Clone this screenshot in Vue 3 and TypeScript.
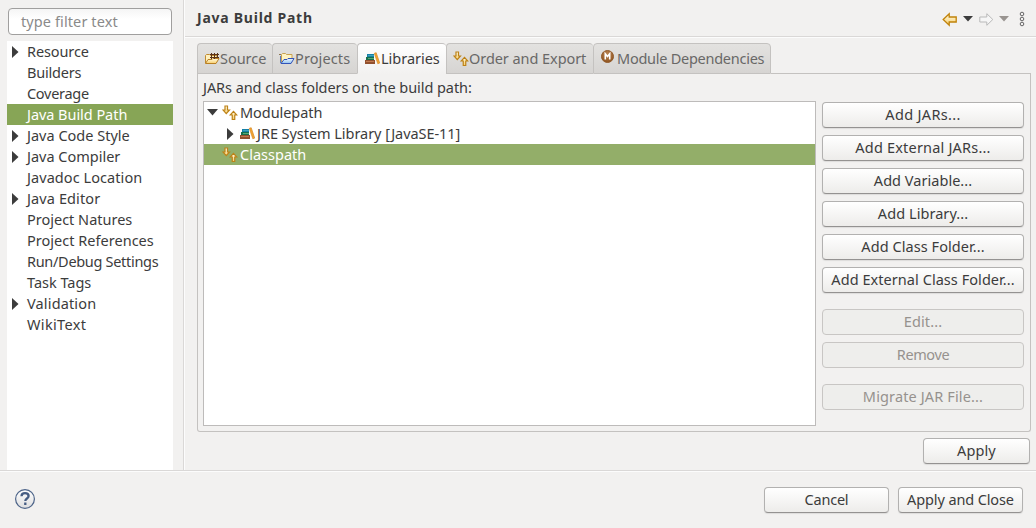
<script setup lang="ts">
interface Item { label: string; width: number; expandable?: boolean; selected?: boolean }
interface Action { label: string; width: number; disabled?: boolean; gap?: boolean }
interface Tab { label: string; width: number; size: number; icon: string; pad: number; active?: boolean }

/* Spreads the letters of a label over its assigned width. */
const vFit = {
  mounted(el: HTMLElement, binding: { value: number }) {
    const natural = el.getBoundingClientRect().width
    const count = (el.textContent ?? '').length
    el.style.letterSpacing = `${(binding.value - 0.7 - natural) / count}px`
  },
}

const pages: Item[] = [
  { label: 'Resource', width: 62.5, expandable: true },
  { label: 'Builders', width: 55 },
  { label: 'Coverage', width: 62.5 },
  { label: 'Java Build Path', width: 101, selected: true },
  { label: 'Java Code Style', width: 103.5, expandable: true },
  { label: 'Java Compiler', width: 94, expandable: true },
  { label: 'Javadoc Location', width: 116 },
  { label: 'Java Editor', width: 74, expandable: true },
  { label: 'Project Natures', width: 106 },
  { label: 'Project References', width: 127.5 },
  { label: 'Run/Debug Settings', width: 132 },
  { label: 'Task Tags', width: 65 },
  { label: 'Validation', width: 70, expandable: true },
  { label: 'WikiText', width: 60 },
]

const tabs: Tab[] = [
  { label: 'Source', width: 47, size: 75, icon: 'source', pad: 6 },
  { label: 'Projects', width: 56, size: 85, icon: 'projects', pad: 6 },
  { label: 'Libraries', width: 59.5, size: 89, icon: 'books', pad: 7, active: true },
  { label: 'Order and Export', width: 118, size: 147, icon: 'order', pad: 6 },
  { label: 'Module Dependencies', width: 148, size: 178, icon: 'module', pad: 6 },
]

const actions: Action[] = [
  { label: 'Add JARs...', width: 76 },
  { label: 'Add External JARs...', width: 136 },
  { label: 'Add Variable...', width: 99 },
  { label: 'Add Library...', width: 91 },
  { label: 'Add Class Folder...', width: 124 },
  { label: 'Add External Class Folder...', width: 184 },
  { label: 'Edit...', width: 39, disabled: true, gap: true },
  { label: 'Remove', width: 53, disabled: true },
  { label: 'Migrate JAR File...', width: 121, disabled: true, gap: true },
]
</script>

<template>
  <div class="dialog">
    <svg class="defs" aria-hidden="true">
      <defs>
        <linearGradient id="gold" x1="0" y1="0" x2="0" y2="1"><stop offset="0" stop-color="#fffbe6" /><stop offset="1" stop-color="#f8cf6c" /></linearGradient>
        <linearGradient id="blue" x1="0" y1="0" x2="0" y2="1"><stop offset="0" stop-color="#f0f8ff" /><stop offset="1" stop-color="#91c2ee" /></linearGradient>
        <radialGradient id="brown" cx=".5" cy=".3" r=".7"><stop offset="0" stop-color="#b98352" /><stop offset="1" stop-color="#8f541f" /></radialGradient>
        <linearGradient id="help" x1="0" y1="0" x2="0" y2="1"><stop offset="0" stop-color="#fff" /><stop offset="1" stop-color="#dededf" /></linearGradient>
        <symbol id="source" viewBox="0 0 16 16">
          <path d="M1.5 12V4.500l1-1h3l1 1H13V8" fill="#fff0bd" stroke="#c08a30" />
          <path d="M1.500 12.500L4 8.500h4l1-1h6l-3 5z" fill="url(#gold)" stroke="#b98024" />
          <path d="M7.500 2v6M10.500 2v6M13.500 2v5M6 3.500h9M6 6.500h9" fill="none" stroke="#5b3217" />
        </symbol>
        <symbol id="projects" viewBox="0 0 16 16">
          <path d="M0 3.500h2" stroke="#8a7350" />
          <path d="M2.500 11V3.500l1-1h3l1 1H13V7" fill="#fff3c3" stroke="#c8a150" />
          <path d="M1.500 5v7" stroke="#5579c2" />
          <path d="M2 12.500L5 8.500h3l1-1h6l-3 5z" fill="url(#blue)" stroke="#3353b8" />
        </symbol>
        <symbol id="books" viewBox="0 0 16 16">
          <path d="M2 3h7v3H2z" fill="#1680a6" /><path d="M3 4h6v1H3z" fill="#3da4bd" />
          <path d="M1 6h8v3H1z" fill="#17704c" /><path d="M3 7h6v1H3z" fill="#58a875" />
          <path d="M0 9h10v4H0z" fill="#92502e" /><path d="M1 10h8v1H1z" fill="#c07a50" />
          <path d="M9.300 2.300l1.900-.6 3.500 10.400-1.900.7z" fill="#f4a431" stroke="#d58a28" stroke-width=".7" />
        </symbol>
        <symbol id="order" viewBox="0 0 16 16">
          <path d="M3 1h2.500v4h2L4.250 8.700 1 5h2z" fill="url(#gold)" stroke="#bd8217" stroke-width="1.200" />
          <path d="M10.250 14.500h2.500v-4.500h2L11.500 6.300 8.250 10h2z" fill="url(#gold)" stroke="#bd8217" stroke-width="1.200" />
        </symbol>
        <symbol id="module" viewBox="0 0 16 16">
          <circle cx="7.500" cy="6.500" r="6" fill="url(#brown)" stroke="#925b2b" />
          <path d="M5.300 9.500v-5.700l2.200 2.700 2.200-2.700v5.700" fill="none" stroke="#fff" stroke-width="1.600" />
        </symbol>
        <symbol id="arrow" viewBox="0 0 16 16"><path d="M1.200 7.500l6-5.800v3.300h7v5h-7v3.300z" /></symbol>
      </defs>
    </svg>

    <div class="upper">
      <aside class="sidebar">
        <div class="filter"><span v-fit="97.5">type filter text</span></div>
        <ul class="pages">
          <li v-for="p in pages" :key="p.label" :class="{ selected: p.selected }">
            <i class="slot"><svg v-if="p.expandable" width="7" height="12"><path d="M0 0l6.500 6L0 12z" /></svg></i>
            <span v-fit="p.width">{{ p.label }}</span>
          </li>
        </ul>
      </aside>

      <main class="content">
        <header class="header">
          <h1><span v-fit="116.5">Java Build Path</span></h1>
          <div class="nav">
            <svg class="back" width="16" height="16"><use href="#arrow" /></svg>
            <svg class="caret" width="10" height="6"><path d="M0 0h10L5 5.500z" /></svg>
            <svg class="forward" width="16" height="16"><use href="#arrow" /></svg>
            <svg class="caret dim" width="10" height="6"><path d="M0 0h10L5 5.500z" /></svg>
            <svg class="more" width="6" height="16"><circle cx="3" cy="3" r="1.800" /><circle cx="3" cy="8" r="1.800" /><circle cx="3" cy="13" r="1.800" /></svg>
          </div>
        </header>

        <nav class="tabs">
          <div v-for="t in tabs" :key="t.label" class="tab" :class="[t.icon, { active: t.active }]" :style="{ width: t.size + 'px', paddingLeft: t.pad + 'px' }">
            <svg width="16" height="16"><use :href="'#' + t.icon" /></svg><span v-fit="t.width">{{ t.label }}</span>
          </div>
          <div class="rest"></div>
        </nav>

        <section class="panel">
          <p class="caption"><span v-fit="269.5">JARs and class folders on the build path:</span></p>
          <div class="columns">
            <div class="tree">
              <div class="node">
                <svg class="open" width="11" height="7"><path d="M0 0h11L5.500 6.500z" /></svg>
                <svg width="16" height="16"><use href="#order" /></svg><span v-fit="83">Modulepath</span>
              </div>
              <div class="node child">
                <svg class="closed" width="7" height="12"><path d="M0 0l6.500 6L0 12z" /></svg>
                <svg width="16" height="16"><use href="#books" /></svg><span v-fit="204">JRE System Library [JavaSE-11]</span>
              </div>
              <div class="node leaf selected">
                <svg width="16" height="16"><use href="#order" /></svg><span v-fit="67">Classpath</span>
              </div>
            </div>
            <div class="actions">
              <button v-for="a in actions" :key="a.label" :class="{ gap: a.gap }" :disabled="a.disabled"><span v-fit="a.width">{{ a.label }}</span></button>
            </div>
          </div>
        </section>
        <div class="apply"><button><span v-fit="39.5">Apply</span></button></div>
      </main>
    </div>

    <footer class="footer">
      <svg width="22" height="22">
        <circle cx="11" cy="11" r="9.400" fill="url(#help)" stroke="#4c6388" stroke-width="1.200" />
        <path d="M7.500 8.200C7.600 6 9 5.200 11 5.200c2.200 0 3.600 1.100 3.600 2.800 0 2.600-3.300 2.300-3.300 5M11.300 14.500v2.500" fill="none" stroke="#465d83" stroke-width="2.300" />
      </svg>
      <div class="confirm">
        <button><span v-fit="44.5">Cancel</span></button>
        <button><span v-fit="107.5">Apply and Close</span></button>
      </div>
    </footer>
  </div>
</template>

<style>
body { margin: 0; background: #f2f1f0; }
</style>

<style scoped>
* { box-sizing: border-box; }
.dialog { width: 1036px; height: 528px; display: flex; flex-direction: column; overflow: hidden; background: #f2f1f0; color: #3c3c3c; font: 14.5px/21px "Noto Sans", "Open Sans", sans-serif; }
.defs { width: 0; height: 0; display: block; flex: none; }
span { display: inline-block; white-space: nowrap; }
svg { display: block; flex: none; }
.upper { height: 470px; display: flex; }
.sidebar { width: 184px; padding: 8px 10px 0 7px; border-right: 1px solid #dad8d7; }
.filter { height: 27px; width: 164px; margin: 0 0 6px 1px; padding: 2px 12px; border: 1px solid #a09f9e; border-radius: 4px; background: linear-gradient(#f5f5f5, #fff 40%); color: #8a8a8a; }
.pages { margin: 0; padding: 0; list-style: none; height: 429px; background: #fff; }
.pages li { height: 21px; display: flex; align-items: center; }
.slot { width: 20px; padding-left: 5px; }
.slot svg, .open, .closed { fill: #3c3c3c; }
.pages .selected { background: #87a556; color: #fff; }
.content { flex: 1; min-width: 0; border-left: 1px solid #fcfcfc; }
.header { height: 37px; display: flex; justify-content: space-between; border-bottom: 1px solid #dad8d7; box-shadow: 0 1px #fcfcfc; }
h1 { margin: 0; padding: 7px 0 0 12px; font-size: 14px; line-height: 21px; font-weight: 700; }
.nav { display: flex; align-items: center; padding: 2px 11px 0 0; }
.nav .back, .nav .forward { margin-top: 2px; }
.back { fill: url(#gold); stroke: #c08209; stroke-width: 1.3; }
.forward { fill: #f6f6f6; stroke: #b9b9b9; margin-left: 5px; transform: scaleX(-1); }
.caret { margin-left: 5px; fill: #3c3c3c; }
.dim { fill: #999490; }
.more { margin-left: 10px; fill: none; stroke: #666; }
.tabs { display: flex; height: 31px; margin: 6px 5px 0 12px; }
.tab { display: flex; align-items: center; padding-bottom: 1px; border: 1px solid #c4c2c0; border-right-width: 0; border-radius: 4px 4px 0 0; background: linear-gradient(#e3e2e0, #d6d4d2); color: #696867; }
.tab svg { margin-top: 2px; }
.tab.module svg { margin-top: 0; margin-right: 1px; }
.tab.module { border-right-width: 1px; }
.tab.active { border-bottom-color: transparent; background: linear-gradient(#fff, #f2f1f0) border-box; color: #3c3c3c; }
.rest { flex: 1; border-bottom: 1px solid #c4c2c0; }
.panel { height: 358px; margin: 0 5px 0 12px; padding: 3px 6px 0 5px; border: 1px solid #c4c2c0; border-top: 0; border-radius: 0 0 3px 3px; }
.caption { margin: 0; height: 24px; }
.columns { display: flex; gap: 6px; }
.tree { width: 613px; height: 325px; border: 1px solid #bdbbba; background: #fff; }
.node { height: 21px; display: flex; align-items: center; padding-left: 3px; }
.open { margin-right: 4px; }
.node span { margin-left: 2px; }
.node.child { padding-left: 23px; }
.closed { margin-right: 6px; }
.child span { margin-left: 1px; }
.node.leaf { padding-left: 18px; }
.node.selected { background: #93ae69; color: #fff; }
.actions { width: 202px; padding-top: 1px; display: flex; flex-direction: column; gap: 7px; }
button { height: 26px; padding: 0 0 2px; display: flex; align-items: center; justify-content: center; border: 1px solid #b2b1b0; border-bottom-color: #949291; border-radius: 4px; background: linear-gradient(#fff, #edecea); box-shadow: 0 1px 1px #dddcdb; color: #3c3c3c; font: inherit; }
button.gap { margin-top: 9px; }
button:disabled { border-color: #c8c6c4; background: #eeeeec; box-shadow: none; color: #96928e; }
.apply { display: flex; justify-content: flex-end; padding: 6px 6px 0 0; }
.apply button { width: 107px; }
.footer { height: 58px; border-top: 1px solid #dad8d7; box-shadow: inset 0 1px #fcfcfc; padding: 16px 13px 0 14px; display: flex; justify-content: space-between; }
.footer svg { margin-top: 1px; }
.confirm { display: flex; gap: 9px; }
.confirm button { width: 125px; }
</style>
